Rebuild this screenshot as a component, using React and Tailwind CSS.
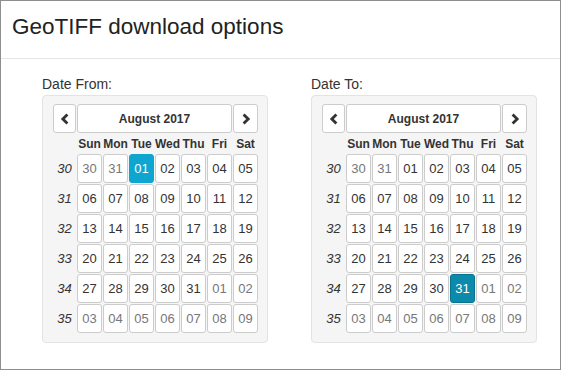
import React from 'react';

const semanas = [30, 31, 32, 33, 34, 35];
const nombresDias = ['Sun', 'Mon', 'Tue', 'Wed', 'Thu', 'Fri', 'Sat'];

function construirDias() {
  const dias = [];
  dias.push({ n: 30, fuera: true }, { n: 31, fuera: true });
  for (let d = 1; d <= 31; d++) dias.push({ n: d, fuera: false });
  for (let d = 1; d <= 9; d++) dias.push({ n: d, fuera: true });
  return dias;
}

const dias = construirDias();
const pad = (n) => String(n).padStart(2, '0');

function Flecha({ derecha }) {
  return (
    <svg width="10" height="12" viewBox="0 0 10 12">
      <path
        d={derecha ? 'M2.6 1.4 L7.2 6 L2.6 10.6' : 'M7.4 1.4 L2.8 6 L7.4 10.6'}
        fill="none"
        stroke="#333"
        strokeWidth="2.8"
        strokeLinejoin="miter"
      />
    </svg>
  );
}

function Calendario({ etiqueta, seleccionado, colorSel }) {
  return (
    <div className="w-[226px]">
      <div className="text-[14px] leading-5 text-[#333]">{etiqueta}</div>
      <div className="mt-px bg-[#f5f5f5] border border-[#e3e3e3] rounded pt-[8px] pb-[9px] pl-[10px]">
        <div className="grid grid-cols-[23px_repeat(7,25px)] gap-px [grid-template-rows:29px_19px_repeat(6,29px)]">
          <button className="flex items-center justify-center bg-white border border-[#ccc] rounded-[3px]">
            <Flecha />
          </button>
          <button className="col-span-6 flex items-center justify-center bg-white border border-[#ccc] rounded-[3px] text-[12px] font-bold text-[#333]">
            August 2017
          </button>
          <button className="flex items-center justify-center bg-white border border-[#ccc] rounded-[3px]">
            <Flecha derecha />
          </button>

          <div />
          {nombresDias.map((d) => (
            <div key={d} className="flex items-center justify-center text-[12px] font-bold text-[#333]">
              {d}
            </div>
          ))}

          {semanas.map((s, fila) => (
            <React.Fragment key={s}>
              <div className="flex items-center justify-center text-[13px] italic text-[#333]">{s}</div>
              {dias.slice(fila * 7, fila * 7 + 7).map((d, i) => {
                const sel = !d.fuera && d.n === seleccionado;
                return (
                  <button
                    key={i}
                    className={
                      sel
                        ? `flex items-center justify-center rounded-[3px] text-[13px] text-white ${colorSel}`
                        : `flex items-center justify-center bg-white border border-[#ccc] rounded-[3px] text-[13px] ${d.fuera ? 'text-[#777]' : 'text-[#333]'}`
                    }
                  >
                    {pad(d.n)}
                  </button>
                );
              })}
            </React.Fragment>
          ))}
        </div>
      </div>
    </div>
  );
}

export default function App() {
  return (
    <div className="w-[561px] h-[370px] border border-[#8e8e8e] bg-white font-['Liberation_Sans',Arial,sans-serif]">
      <div className="h-[58px] border-b border-[#e5e5e5] pt-[13px] pl-[11px]">
        <h4 className="text-[22.5px] leading-[26px] text-[#222]">GeoTIFF download options</h4>
      </div>
      <div className="flex gap-[43px] pl-[41px] pt-[15px]">
        <Calendario etiqueta="Date From:" seleccionado={1} colorSel="bg-[#0ea6d0] border border-[#0ea6d0]" />
        <Calendario etiqueta="Date To:" seleccionado={31} colorSel="bg-[#0b8aab] border border-[#08738f]" />
      </div>
    </div>
  );
}
